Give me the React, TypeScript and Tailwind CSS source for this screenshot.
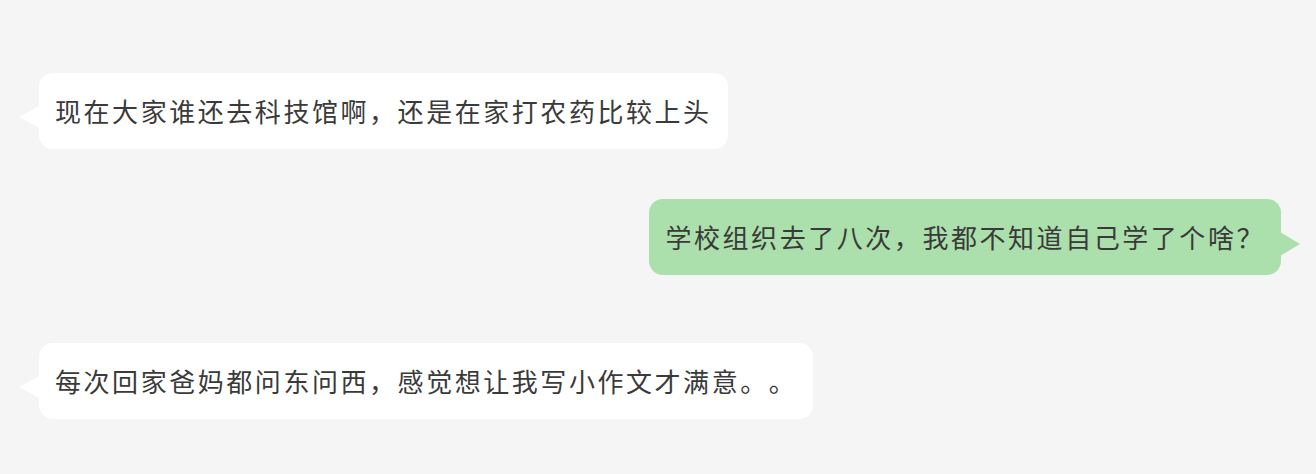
import React from 'react';

type Msg = { id: number; text: string; mine: boolean; gap: string };

const messages: Msg[] = [
  { id: 1, text: '现在大家谁还去科技馆啊，还是在家打农药比较上头', mine: false, gap: 'mt-[72px]' },
  { id: 2, text: '学校组织去了八次，我都不知道自己学了个啥？', mine: true, gap: 'mt-[50px]' },
  { id: 3, text: '每次回家爸妈都问东问西，感觉想让我写小作文才满意。。', mine: false, gap: 'mt-[68px]' },
];

function Bubble({ msg }: { msg: Msg }) {
  return (
    <div className={`flex ${msg.gap} ${msg.mine ? 'justify-end pr-[35px]' : 'justify-start pl-[39px]'}`}>
      <div
        className={`relative rounded-[14px] px-[16px] py-[20px] text-[26px] leading-[36px] tracking-[2.55px] text-[#3a3a3a] [text-spacing-trim:space-all] ${
          msg.mine ? 'bg-[#abdfab]' : 'bg-white'
        }`}
      >
        {msg.mine ? (
          <span className="absolute -right-[19px] top-[33px] h-0 w-0 border-y-[12px] border-l-[20px] border-y-transparent border-l-[#abdfab]" />
        ) : (
          <span className="absolute -left-[20px] top-[33px] h-0 w-0 border-y-[11px] border-r-[20px] border-y-transparent border-r-white" />
        )}
        {msg.text}
      </div>
    </div>
  );
}

export default function App() {
  return (
    <div
      className="min-h-[474px] w-full bg-[#f5f5f5]"
      style={{ fontFamily: '"Noto Sans CJK SC", "Noto Sans", sans-serif' }}
    >
      <div className="flex flex-col pt-px">
        {messages.map(m => (
          <Bubble key={m.id} msg={m} />
        ))}
      </div>
    </div>
  );
}
